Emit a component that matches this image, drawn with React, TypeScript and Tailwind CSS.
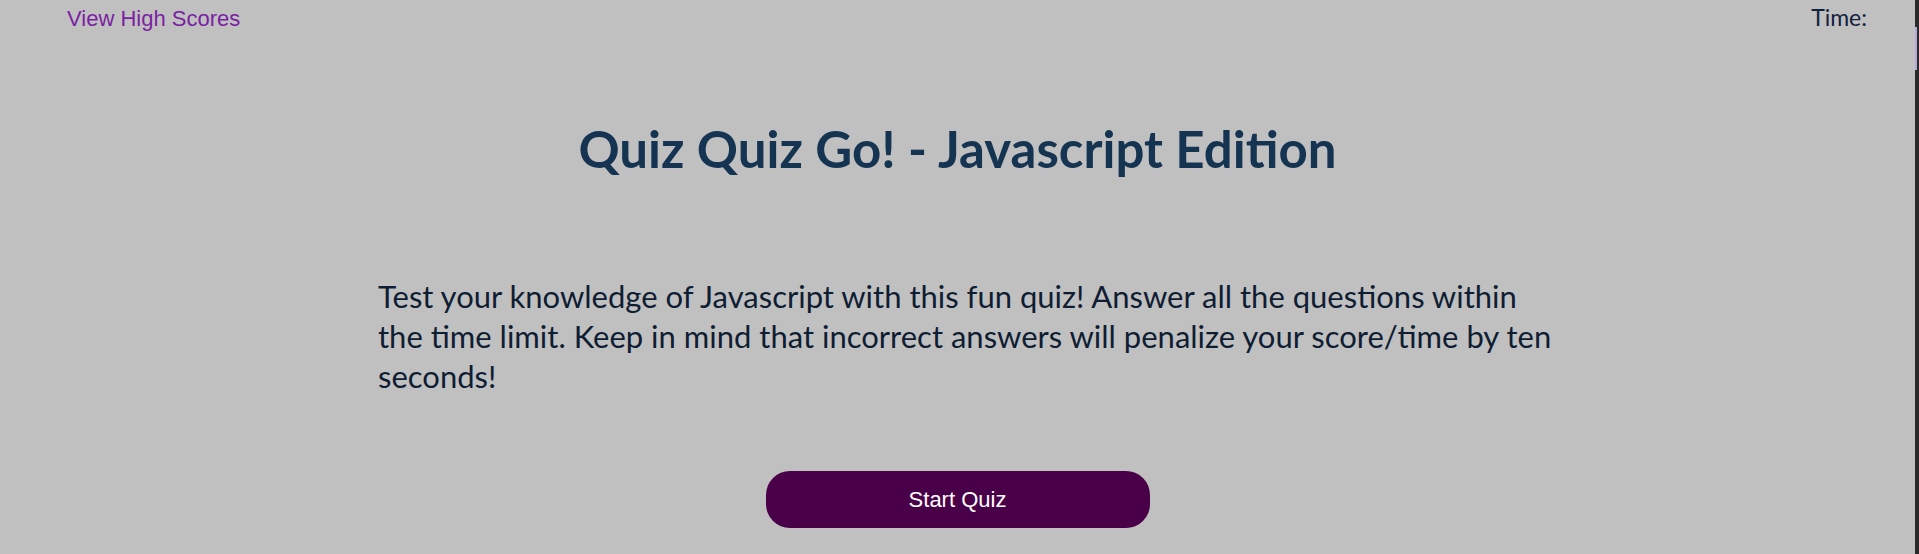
export default function App() {
  return (
    <div className="flex h-[554px] w-full overflow-hidden bg-[#c0c0c0]">
      <div className="flex flex-1 flex-col">
        {/* header */}
        <header className="flex items-start justify-between pl-[67px] pr-[48px] pt-[2px]">
          <a href="#" className="font-['Liberation_Sans',Arial,sans-serif] text-[22px] text-[#7b1fa2]">
            View High Scores
          </a>
          <span className="font-['Lato',sans-serif] text-[23px] leading-[30px] text-[#14213d]">Time:</span>
        </header>

        <main className="flex flex-col items-center font-['Lato',sans-serif]">
          <h1 className="mt-[76px] text-[51px] font-bold text-[#153452]">
            Quiz Quiz Go! - Javascript Edition
          </h1>
          <p className="mt-[88px] ml-[378px] w-[1186px] self-start text-[31px] leading-[40px] text-[#0f1d33]">
            Test your knowledge of Javascript with this fun quiz! Answer all the questions within
            the time limit. Keep in mind that incorrect answers will penalize your score/time by ten
            seconds!
          </p>
          <button className="mt-[75px] h-[57px] w-[384px] rounded-[24px] bg-[#4a0048] font-['Liberation_Sans',Arial,sans-serif] text-[22px] text-white">
            Start Quiz
          </button>
        </main>
      </div>
      <div className="flex w-[4px] flex-col bg-[#2a2a2a] pt-[27px]">
        <div className="h-[43px] w-[2px] bg-[#b7a9d9]" />
      </div>
    </div>
  );
}
